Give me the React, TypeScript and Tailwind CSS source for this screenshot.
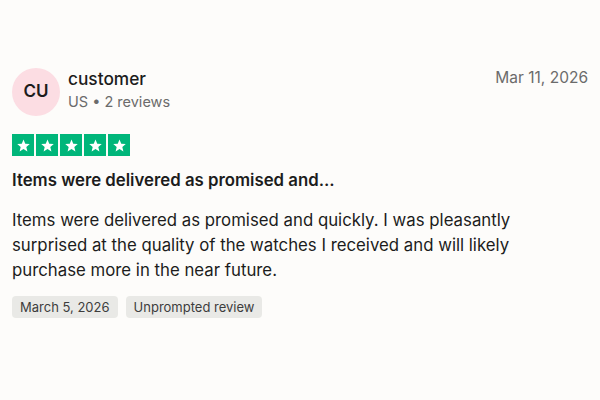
import React from "react";

const Star = () => (
  <div className="flex h-[22px] w-[22px] items-center justify-center bg-[#00b67a]">
    <svg viewBox="0 0 24 24" className="h-[15px] w-[15px]" fill="#ffffff">
      <path d="M12 2.5l2.8 6.6 7.2.6-5.5 4.7 1.7 7-6.2-3.8-6.2 3.8 1.7-7L2 9.7l7.2-.6z" />
    </svg>
  </div>
);

export default function App() {
  return (
    <div
      className="h-[400px] w-[600px] bg-[#fdfcfa] text-[#1c1c1c]"
      style={{ fontFamily: "Inter, 'Noto Sans', sans-serif" }}
    >
      <div className="px-3 pt-[68px]">
        <div className="flex items-start justify-between">
          <div className="flex items-center gap-2">
            <div className="flex h-12 w-12 items-center justify-center rounded-full bg-[#fcdde3] text-[17px] font-semibold text-[#1c1c1c]">
              CU
            </div>
            <div className="-mt-[3px] flex flex-col">
              <span className="text-[17.3px] font-medium leading-[22px]">customer</span>
              <span className="text-[14.5px] leading-[24px] text-[#6b6b6b]">US • 2 reviews</span>
            </div>
          </div>
          <span className="-mt-[1px] text-[15.5px] leading-[22px] text-[#6b6b6b]">Mar 11, 2026</span>
        </div>
        <div className="mt-[18px] flex gap-[2px]">
          <Star />
          <Star />
          <Star />
          <Star />
          <Star />
        </div>
        <div className="mt-[12px] text-[16.8px] font-semibold leading-[24px]">
          Items were delivered as promised and...
        </div>
        <p className="mt-[16px] text-[16.8px] leading-[25px]">
          Items were delivered as promised and quickly. I was pleasantly
          <br />
          surprised at the quality of the watches I received and will likely
          <br />
          purchase more in the near future.
        </p>
        <div className="mt-[13px] flex gap-2">
          <span className="rounded-[4px] bg-[#e9e9e6] px-2 py-[3px] text-[13px] leading-[16px] text-[#3d3d3d]">
            March 5, 2026
          </span>
          <span className="rounded-[4px] bg-[#e9e9e6] px-2 py-[3px] text-[13px] leading-[16px] text-[#3d3d3d]">
            Unprompted review
          </span>
        </div>
      </div>
    </div>
  );
}
